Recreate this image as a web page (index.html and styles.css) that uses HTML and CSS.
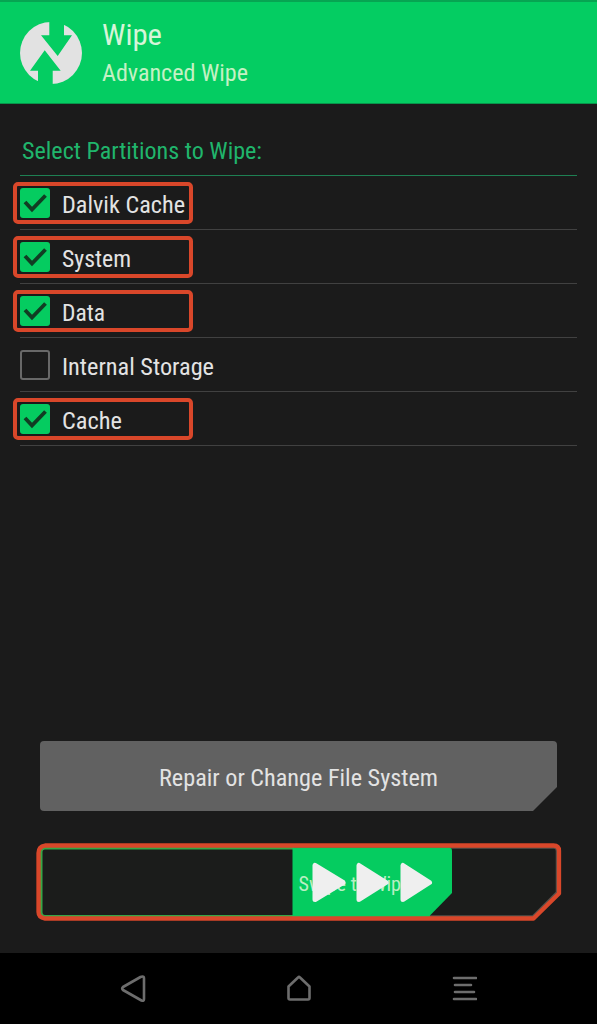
FILE: index.html
```html
<!DOCTYPE html>
<html lang="en">
<head>
<meta charset="utf-8">
<title>Advanced Wipe</title>
<link rel="stylesheet" href="styles.css">
</head>
<body>
<header class="header">
  <svg class="logo" width="64" height="64" viewBox="0 0 64 64">
    <circle cx="32" cy="32" r="31" fill="#e2e2e2"/>
    <path fill="#04cd62" d="M30.300 0H45V14.300H53L38.700 35 22 14.300H30.300zM19 64V49.700H11L25.700 29.200 41.700 49.700H33.700V64z"/>
  </svg>
  <div class="titles">
    <svg class="label title" width="60" height="40"><text x="0" y="27" textLength="60" lengthAdjust="spacingAndGlyphs">Wipe</text></svg>
    <svg class="label subtitle" width="146" height="30"><text x="0" y="24" textLength="146" lengthAdjust="spacingAndGlyphs">Advanced Wipe</text></svg>
  </div>
</header>
<main class="content">
  <h2 class="section"><svg class="label" width="240" height="30"><text x="0" y="24" textLength="240" lengthAdjust="spacingAndGlyphs">Select Partitions to Wipe:</text></svg></h2>
  <ul class="list">
    <li class="row"><div class="item marked"><span class="box on"><svg width="30" height="30"><path class="tick" d="M5 14 12 21.500 25.500 7.500"/></svg></span><svg class="label" width="123" height="30"><text x="0" y="24" textLength="123" lengthAdjust="spacingAndGlyphs">Dalvik Cache</text></svg></div></li>
    <li class="row"><div class="item marked"><span class="box on"><svg width="30" height="30"><path class="tick" d="M5 14 12 21.500 25.500 7.500"/></svg></span><svg class="label" width="69" height="30"><text x="0" y="24" textLength="69" lengthAdjust="spacingAndGlyphs">System</text></svg></div></li>
    <li class="row"><div class="item marked"><span class="box on"><svg width="30" height="30"><path class="tick" d="M5 14 12 21.500 25.500 7.500"/></svg></span><svg class="label" width="43" height="30"><text x="0" y="24" textLength="43" lengthAdjust="spacingAndGlyphs">Data</text></svg></div></li>
    <li class="row"><div class="item"><span class="box"></span><svg class="label" width="152" height="30"><text x="0" y="24" textLength="152" lengthAdjust="spacingAndGlyphs">Internal Storage</text></svg></div></li>
    <li class="row"><div class="item marked"><span class="box on"><svg width="30" height="30"><path class="tick" d="M5 14 12 21.500 25.500 7.500"/></svg></span><svg class="label" width="60" height="30"><text x="0" y="24" textLength="60" lengthAdjust="spacingAndGlyphs">Cache</text></svg></div></li>
  </ul>
  <div class="actions">
    <div class="repair"><svg class="label" width="279" height="30"><text x="0" y="24" textLength="279" lengthAdjust="spacingAndGlyphs">Repair or Change File System</text></svg></div>
    <svg class="slider" width="526" height="80" viewBox="0 0 526 80">
      <path d="M9 4.500H518Q521 4.500 521 8V49.500L497 73.500H9Q4.500 73.500 4.500 69V9Q4.500 4.500 9 4.500z" fill="#1b1c1b" stroke="#57504a" stroke-width="2.500"/>
      <path d="M258 5H9Q5 5 5 9V69Q5 73.500 9 73.500H394" fill="none" stroke="#35a647" stroke-width="3"/>
      <path d="M256.500 4.500H413Q416 4.500 416 8V50L392.500 74H256.500z" fill="#05cc60"/>
      <path d="M9 2.500H517.500Q523 2.500 523 8V50.500L497.500 75.500H9Q2.500 74.500 2.500 69V10Q2.500 3.500 9 2.500z" fill="none" stroke="#d9472a" stroke-width="4.300" stroke-linejoin="round"/>
      <text class="swipe" x="262.500" y="47.700" textLength="112" lengthAdjust="spacingAndGlyphs">Swipe to Wipe</text>
      <g fill="#efefef" stroke="#efefef" stroke-width="5" stroke-linejoin="round">
        <path d="M279 22.500V56.500L307 39.500z"/>
        <path d="M323 22.500V56.500L350 39.500z"/>
        <path d="M367 22.500V56.500L393.500 39.500z"/>
      </g>
    </svg>
  </div>
</main>
<nav class="nav">
  <svg width="26" height="28"><path d="M22.500 1.500Q24 1.500 24 3.500V24Q24 26.500 21.500 25.500L3 15Q1.500 13.500 3 12L20.500 2Q21.500 1.500 22.500 1.500z"/></svg>
  <svg width="26" height="28"><path d="M2.500 11.500 12 2.500Q13 1.500 14 2.500L23.500 11.500V23Q23.500 24.500 22 24.500H4Q2.500 24.500 2.500 23z"/></svg>
  <svg width="26" height="28"><path d="M3 3H25M4 10H20M4 17H23M3 24H25"/></svg>
</nav>
</body>
</html>
```
FILE: styles.css
```css
* { box-sizing: border-box; }
body {
  margin: 0;
  width: 597px;
  height: 1024px;
  display: flex;
  flex-direction: column;
  background: #1b1b1b;
  font-family: "Roboto Condensed", Roboto, "Liberation Sans", sans-serif;
  font-stretch: 75%;
  overflow: hidden;
}
svg { display: block; flex: none; }
.label {
  overflow: visible;
  font-size: 24.5px;
  font-weight: 400;
  fill: #e3e3e3;
}
.header {
  height: 104px;
  flex: none;
  display: flex;
  padding: 18px 0 0 19px;
  background: #04cd62;
  border-top: 2px solid #07a552;
  border-bottom: 1px solid #08944b;
}
.logo { margin-top: 1px; }
.titles { padding-left: 19px; }
.title { margin-top: -2px; font-size: 30px; fill: #d6f5d8; }
.subtitle { margin-top: -1px; font-size: 24px; fill: #c5f1c4; }
.content {
  flex: 1;
  display: flex;
  flex-direction: column;
  padding: 0 20px;
}
.section {
  margin: 0;
  height: 72px;
  padding: 31px 0 0 2px;
  border-bottom: 1px solid #1e8053;
}
.section .label { fill: #20b56c; }
.list { margin: 0; padding: 0; list-style: none; }
.row {
  height: 54px;
  padding-top: 6px;
  border-bottom: 1px solid #414141;
}
.item {
  width: 180px;
  height: 42px;
  margin-left: -7px;
  padding: 2px 3px;
  border: 4px solid transparent;
  border-radius: 5px;
  display: flex;
}
.marked { border-color: #d9472a; }
.item .label { margin: 1px 0 0 12px; }
.box {
  width: 30px;
  height: 30px;
  flex: none;
  border: 2px solid #686868;
  border-radius: 3px;
}
.box.on { border: 0; background: #05cc60; }
.tick { fill: none; stroke: #113d23; stroke-width: 3.800; }
.actions {
  margin-top: auto;
  padding: 0 16px 30px;
}
.repair {
  margin: 0 4px 32px;
  width: 517px;
  height: 70px;
  display: flex;
  justify-content: center;
  padding-top: 21px;
  background: #616161;
  border-radius: 4px;
  clip-path: polygon(0 0, 100% 0, 100% 46px, calc(100% - 24px) 100%, 0 100%);
}
.swipe { font-size: 20.5px; fill: #b9efc3; }
.nav {
  height: 71px;
  flex: none;
  display: flex;
  justify-content: space-between;
  padding: 22px 120px 0;
  background: #000;
}
.nav path {
  fill: none;
  stroke: #6d6d6d;
  stroke-width: 2.600;
  stroke-linecap: round;
  stroke-linejoin: round;
}
```
